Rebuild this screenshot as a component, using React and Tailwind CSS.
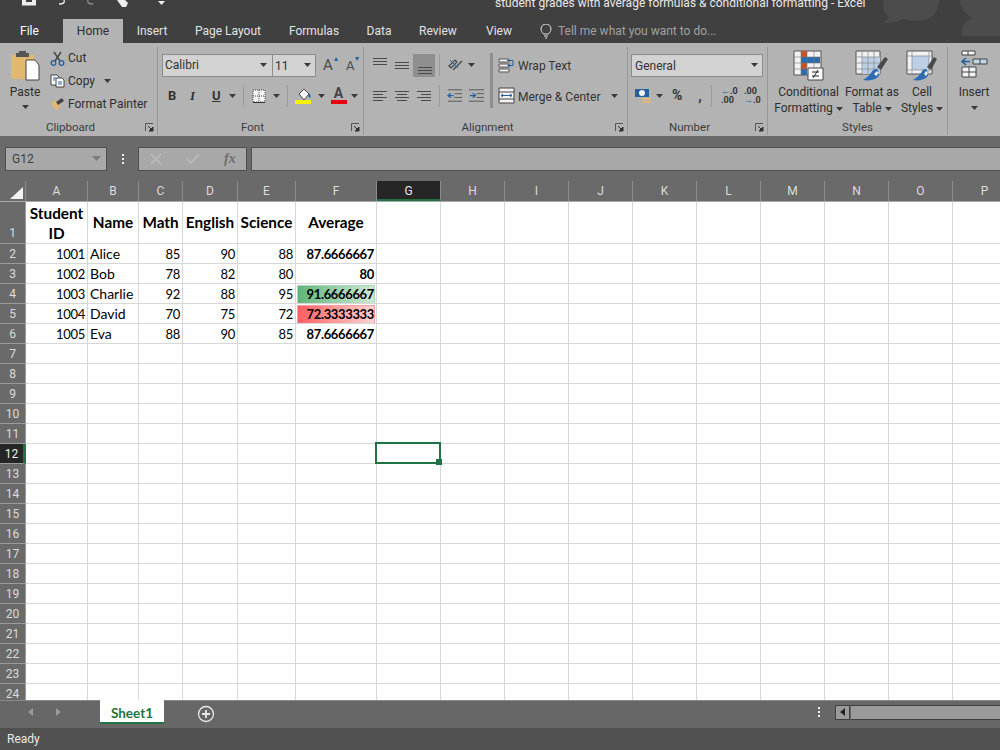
import React from "react";

const ui = "font-['Roboto',sans-serif]";
const columns = [
  ["A", 62], ["B", 51], ["C", 44], ["D", 55], ["E", 58], ["F", 81], ["G", 64], ["H", 64],
  ["I", 64], ["J", 64], ["K", 64], ["L", 64], ["M", 64], ["N", 64], ["O", 64], ["P", 64],
];
const students = [
  ["1001", "Alice", "85", "90", "88", "87.6666667", ""],
  ["1002", "Bob", "78", "82", "80", "80", ""],
  ["1003", "Charlie", "92", "88", "95", "91.6666667", "green"],
  ["1004", "David", "70", "75", "72", "72.3333333", "red"],
  ["1005", "Eva", "88", "90", "85", "87.6666667", ""],
];
const rowNumbers = Array.from({ length: 24 }, (_, i) => i + 1);

function Caret({ className = "" }) {
  return (
    <svg width="7" height="4" viewBox="0 0 7 4" className={className}>
      <path d="M0 0h7L3.500 4z" fill="#3a3a3a" />
    </svg>
  );
}

function Launcher() {
  return (
    <svg width="9" height="9" viewBox="0 0 9 9" className="absolute right-[3px] bottom-[3px]">
      <path d="M.5 8V.5H8" fill="none" stroke="#555" />
      <path d="M3 3l4 4M8 4v4H4z" stroke="#333" fill="#333" />
    </svg>
  );
}

function Sep({ className = "" }) {
  return <div className={`w-px h-[22px] bg-[#9a9a9a] ${className}`} />;
}

function Lines({ rows, active }) {
  // small paragraph-style alignment glyph
  return (
    <svg width="22" height="23" viewBox="0 0 22 23" className={active ? "bg-[#8f8f8f]" : ""}>
      {rows.map(([x1, x2, y], i) => (
        <path key={i} d={`M${x1} ${y}.5H${x2}`} stroke="#4a4a4a" />
      ))}
    </svg>
  );
}

function Group({ width, label, children }) {
  return (
    <div className={`relative h-[88px] mt-[4px] border-r border-[#989898] flex flex-col shrink-0 ${width}`}>
      <div className="flex-1 min-h-0">{children}</div>
      <div className="h-[17px] pr-[16px] pt-[2px] text-center text-[11.500px] leading-[15px] text-[#3c3c3c]">{label}</div>
      <Launcher />
    </div>
  );
}

function StyleButton({ icon, lines, width }) {
  return (
    <div className={`flex flex-col items-center shrink-0 ${width}`}>
      <div className="h-[37px] pt-[3px]">{icon}</div>
      <div className="text-[12px] leading-[16px] text-[#2e2e2e] whitespace-nowrap text-center">
        {lines[0]}
        <br />
        {lines[1]} <Caret className="inline-block align-middle" />
      </div>
    </div>
  );
}

function ConditionalIcon() {
  return (
    <svg width="32" height="31" viewBox="0 0 32 31">
      <path d="M1 1h27v24H1z" fill="#f2f2f2" stroke="#555" />
      <path d="M8 1h6v6H8zM8 13h6v6H8z" fill="#c8512a" />
      <path d="M8 7h19v6H8zM8 19h6v6H8z" fill="#2b6cb0" />
      <path d="M1 7h27M1 13h27M1 19h27M8 1v24M14 1v24M21 1v24" stroke="#777" strokeWidth=".6" />
      <path d="M15 18h15v12H15z" fill="#fff" stroke="#444" />
      <path d="M19 22h7M19 26h7M25 20l-5 8" stroke="#222" />
    </svg>
  );
}

function TableIcon() {
  return (
    <svg width="34" height="32" viewBox="0 0 34 32">
      <path d="M1 1h24v23H1z" fill="#efefef" stroke="#555" />
      <path d="M7 7h18v17H7z" fill="#bccfe6" />
      <path d="M1 7h24M1 13h24M1 19h24M7 1v23M13 1v23M19 1v23" stroke="#888" strokeWidth=".7" />
      <path d="M22 17l8-10 3 2-7 11z" fill="#4a4a4a" />
      <path d="M8 30c5 1 12 0 15-3 2-2 1-6-1-8-3 0-5 2-6 4-2 3-5 5-8 7z" fill="#2a6cb3" />
      <path d="M19 24l3-3 2 2-3 3z" fill="#eee" />
    </svg>
  );
}

function CellStyleIcon() {
  return (
    <svg width="32" height="32" viewBox="0 0 32 32">
      <path d="M1 1h25v23H1z" fill="#f2f2f2" stroke="#555" />
      <path d="M6 6h17v14H6z" fill="#bccfe6" />
      <path d="M1 6h25M1 20h25M6 1v23M23 1v23" stroke="#888" strokeWidth=".7" />
      <path d="M21 17l7-10 3 2-6 11z" fill="#4a4a4a" />
      <path d="M7 30c5 1 11 0 14-3 2-2 1-6-1-8-3 0-4 2-5 4-2 3-5 5-8 7z" fill="#2a6cb3" />
      <path d="M18 24l2-3 2 2-2 3z" fill="#eee" />
    </svg>
  );
}

function InsertIcon() {
  return (
    <svg width="27" height="28" viewBox="0 0 27 28">
      <path d="M1 1h13v4H1zM7 1v4M1 17h14v10H1zM1 22h14M8 17v10" fill="#f4f4f4" stroke="#444" />
      <path d="M12 9h14v5H12zM19 9v5" fill="#c0d4ea" stroke="#444" />
      <path d="M1 11.500h8M5 8l-4 3.500L5 15" fill="none" stroke="#23609f" strokeWidth="1.600" />
    </svg>
  );
}

function Clipboard() {
  return (
    <div className="flex h-full">
      <div className="w-[43px] flex flex-col items-center pl-[7px] pt-[3px]">
        <svg width="30" height="31" viewBox="0 0 30 31">
          <path d="M1 5h23v24H1z" fill="#e2b871" />
          <path d="M9 3h7V1H9zM6 3h13v4H6z" fill="#555" />
          <path d="M16 10h9l4 5v15H16z" fill="#fff" stroke="#444" />
        </svg>
        <div className="text-[12px] leading-[16px] mt-[3px] text-[#2e2e2e]">Paste</div>
        <Caret className="mt-[5px]" />
      </div>
      <div className="flex flex-col pl-[7px] text-[12px] leading-[23px] text-[#2e2e2e]">
        <div className="flex items-center gap-[3px] h-[23px]">
          <svg width="15" height="15" viewBox="0 0 15 15">
            <path d="M4 1l6 9M11 1L5 10" stroke="#444" strokeWidth="1.400" />
            <circle cx="3.500" cy="12" r="2.300" fill="none" stroke="#23609f" strokeWidth="1.300" />
            <circle cx="11.500" cy="12" r="2.300" fill="none" stroke="#23609f" strokeWidth="1.300" />
          </svg>
          Cut
        </div>
        <div className="flex items-center gap-[3px] h-[23px]">
          <svg width="15" height="14" viewBox="0 0 15 14">
            <path d="M1 1h6l2 2v8H1z" fill="#fff" stroke="#444" />
            <path d="M6 4h6l2 2v7H6z" fill="#fff" stroke="#444" />
            <path d="M3 4h3M3 6h2M8 8h4M8 10h4" stroke="#23609f" />
          </svg>
          Copy
          <Caret className="ml-[6px]" />
        </div>
        <div className="flex items-center gap-[3px] h-[23px]">
          <svg width="15" height="14" viewBox="0 0 15 14">
            <path d="M1 6l5-3 4 7-3 3C5 13 3 9 1 6z" fill="#e2b871" />
            <path d="M6 5l6-4 2 3-6 4z" fill="#444" />
          </svg>
          Format Painter
        </div>
      </div>
    </div>
  );
}

function FontGroup() {
  return (
    <div className="pl-[4px] pt-[7px] flex flex-col text-[#333]">
      <div className="flex items-center h-[23px]">
        <div className="w-[111px] h-[23px] bg-[#d2d2d2] border border-[#8c8c8c] flex items-center justify-between pl-[2px] pr-[5px] text-[12px] leading-[23px]">
          <span className="pt-px">Calibri</span> <Caret />
        </div>
        <div className="w-[43px] h-[23px] bg-[#d2d2d2] border border-l-0 border-[#8c8c8c] flex items-center justify-between pl-[2px] pr-[4px] text-[12px]">
          <span className="pt-px">11</span> <Caret />
        </div>
        <div className="ml-[7px] w-[22px] text-[15px] leading-none text-[#4a4a4a] relative">
          A<span className="absolute left-[11px] -top-[3px] text-[8px] text-[#23609f]">▴</span>
        </div>
        <div className="ml-[1px] text-[13px] leading-none text-[#4a4a4a] relative">
          A<span className="absolute left-[9px] -top-[4px] text-[8px] text-[#23609f]">▾</span>
        </div>
      </div>
      <div className="flex items-center h-[22px] mt-[8px] pl-[6px]">
        <span className="w-[22px] text-[13px] font-bold">B</span>
        <span className="w-[22px] text-[13px] font-bold italic font-['Liberation_Serif',serif]">I</span>
        <span className="w-[17px] text-[13px] font-bold underline">U</span>
        <Caret />
        <Sep className="ml-[7px]" />
        <svg width="14" height="14" viewBox="0 0 14 14" className="ml-[8px]">
          <path d="M1 1h12v12H1z" fill="#f5f5f5" />
          <path d="M1 1h12v12H1zM1 7h12M7 1v12" fill="none" stroke="#444" strokeDasharray="1 1" />
          <path d="M1 13.500h12" stroke="#333" />
        </svg>
        <Caret className="ml-[7px]" />
        <Sep className="ml-[7px]" />
        <svg width="17" height="17" viewBox="0 0 17 17" className="ml-[7px]">
          <path d="M4 7l5-5 5 5-5 6z" fill="#f5f5f5" stroke="#444" />
          <path d="M14 6c2 2 2 4 1 5-2-1-2-3-1-5z" fill="#23609f" />
          <path d="M0 13h16v4H0z" fill="#f7f000" />
        </svg>
        <Caret className="ml-[6px]" />
        <div className="ml-[5px] w-[17px] flex flex-col items-center">
          <span className="text-[14px] leading-[13px] font-bold text-[#444]">A</span>
          <div className="w-[16px] h-[4px] bg-[#e8000c]" />
        </div>
        <Caret className="ml-[4px]" />
      </div>
    </div>
  );
}

function AlignmentGroup() {
  return (
    <div className="pl-[5px] pt-[7px] flex text-[12px] text-[#333]">
      <div className="flex flex-col">
        <div className="flex items-center h-[23px]">
          <Lines rows={[[4, 18, 4], [4, 18, 7], [4, 18, 10]]} />
          <Lines rows={[[4, 18, 8], [4, 18, 11], [4, 18, 14]]} />
          <Lines rows={[[5, 19, 13], [5, 19, 16], [5, 19, 19]]} active />
          <div className="w-px h-[22px] bg-[#9a9a9a] ml-[4px]" />
          <svg width="22" height="18" viewBox="0 0 22 18" className="ml-[6px]">
            <path d="M3 10l6-6 2 2-6 6zM7 14l9-9" fill="none" stroke="#444" strokeWidth="1.200" />
            <path d="M4 4l8 8" stroke="#23609f" />
          </svg>
          <Caret />
        </div>
        <div className="flex items-center h-[22px] mt-[8px]">
          <Lines rows={[[4, 18, 7], [4, 14, 10], [4, 18, 13], [4, 14, 16]]} />
          <Lines rows={[[4, 18, 7], [6, 16, 10], [4, 18, 13], [6, 16, 16]]} />
          <Lines rows={[[4, 18, 7], [8, 18, 10], [4, 18, 13], [8, 18, 16]]} />
          <div className="w-px h-[22px] bg-[#9a9a9a] ml-[4px]" />
          <svg width="38" height="14" viewBox="0 0 40 14" className="ml-[7px]">
            <path d="M1 .500h15M8 4.500h8M8 8.500h8M1 12.500h15M23 .500h16M31 4.500h8M31 8.500h8M23 12.500h16" stroke="#555" />
            <path d="M7 6.500H1M4 4L1 6.500 4 9M24 6.500h6M27 4l3 2.500L27 9" fill="none" stroke="#23609f" strokeWidth="1.300" />
          </svg>
        </div>
      </div>
      <div className="w-[3px] h-[55px] bg-[#8e8e8e] ml-[5px] -mt-[1px]" />
      <div className="flex flex-col pl-[5px] whitespace-nowrap">
        <div className="flex items-center gap-[2px] h-[23px]">
          <svg width="17" height="15" viewBox="0 0 17 15">
            <path d="M1 1h10v3H1zM1 6h10v3H1zM1 11h10v3H1z" fill="#f2f2f2" stroke="#555" />
            <path d="M9 2.500h6v5h-5M12 5.500L10 7.500l2 2" fill="none" stroke="#23609f" />
          </svg>
          <span className="pt-[2px] pl-px">Wrap Text</span>
        </div>
        <div className="flex items-center gap-[2px] h-[22px] mt-[8px]">
          <svg width="17" height="17" viewBox="0 0 17 17">
            <path d="M1 1h15v15H1z" fill="#f2f2f2" stroke="#444" />
            <path d="M1 5h15M1 12h15" stroke="#444" />
            <path d="M3 8.500h11M5 7L3 8.500 5 10M12 7l2 1.500L12 10" fill="none" stroke="#23609f" />
          </svg>
          <span className="pt-[2px] pl-px">Merge &amp; Center</span>
          <Caret className="ml-[9px]" />
        </div>
      </div>
    </div>
  );
}

function NumberGroup() {
  return (
    <div className="pl-[3px] pt-[7px] flex flex-col text-[#333]">
      <div className="w-[132px] h-[23px] bg-[#d2d2d2] border border-[#8c8c8c] flex items-center justify-between pl-[3px] pr-[4px] text-[12px]">
        <span className="pt-px">General</span> <Caret />
      </div>
      <div className="flex items-center h-[22px] mt-[8px] pl-[3px]">
        <svg width="18" height="16" viewBox="0 0 18 16">
          <path d="M1 1h14v8H1z" fill="#23609f" />
          <ellipse cx="8" cy="5" rx="3" ry="3" fill="#f2f2f2" />
          <path d="M8 10h9v2H8zM8 13h9v2H8z" fill="#e2b871" />
        </svg>
        <Caret className="ml-[4px]" />
        <span className="ml-[9px] w-[20px] text-[14px] font-bold text-[#333]">%</span>
        <span className="w-[16px] text-[14px] font-bold text-center leading-none">,</span>
        <Sep className="ml-[3px]" />
        <div className="ml-[9px] w-[17px] flex flex-col text-[9px] leading-[9px] font-bold">
          <div><span className="text-[#23609f]">←</span>.0</div>
          <div>.00</div>
        </div>
        <div className="ml-[6px] w-[17px] flex flex-col text-[9px] leading-[9px] font-bold">
          <div>.00</div>
          <div><span className="text-[#23609f]">→</span>.0</div>
        </div>
      </div>
    </div>
  );
}

function Ribbon() {
  return (
    <div className="h-[93px] bg-[#b3b3b3] flex overflow-hidden">
      <Group width="w-[158px]" label="Clipboard"><Clipboard /></Group>
      <Group width="w-[206px]" label="Font"><FontGroup /></Group>
      <Group width="w-[264px]" label="Alignment"><AlignmentGroup /></Group>
      <Group width="w-[140px]" label="Number"><NumberGroup /></Group>
      <div className="relative h-[88px] mt-[4px] border-r border-[#989898] w-[180px] shrink-0 flex flex-col">
        <div className="flex-1 flex pl-[4px]">
          <StyleButton width="w-[73px]" icon={<ConditionalIcon />} lines={["Conditional", "Formatting"]} />
          <StyleButton width="w-[54px]" icon={<TableIcon />} lines={["Format as", "Table"]} />
          <StyleButton width="w-[46px]" icon={<CellStyleIcon />} lines={["Cell", "Styles"]} />
        </div>
        <div className="h-[17px] pt-[2px] text-center text-[11.500px] leading-[15px] text-[#3c3c3c]">Styles</div>
      </div>
      <div className="w-[52px] mt-[4px] flex flex-col items-center shrink-0">
        <div className="h-[37px] pt-[3px]"><InsertIcon /></div>
        <div className="text-[12px] leading-[16px] text-[#2e2e2e]">Insert</div>
        <Caret className="mt-[6px]" />
      </div>
    </div>
  );
}

function TitleBar() {
  const tabs = [
    ["Insert", "w-[58px]"], ["Page Layout", "w-[94px]"], ["Formulas", "w-[78px]"],
    ["Data", "w-[52px]"], ["Review", "w-[66px]"], ["View", "w-[56px]"],
  ];
  return (
    <div className="relative h-[43px] bg-[#404040] overflow-hidden">
      <svg width="130" height="40" viewBox="0 0 130 40" className="absolute right-0 top-0">
        <path d="M13 0c0 8 1 14 6 17-2 3-4 5-6 6 8 1 14-1 20-4 12 4 26 2 32-6 3-4 4-9 4-13z" fill="#4c4c4c" />
        <path d="M90 0c0 9 6 16 14 18-8 2-14 8-12 18h38V0z" fill="#4c4c4c" />
      </svg>
      <div className="h-[19px] relative">
        <svg width="15" height="6" viewBox="0 0 15 6" className="absolute left-[22px] top-0">
          <path d="M0 0h14v5.500H0z" fill="#ededed" />
          <path d="M4 0h6v2H4z" fill="#404040" />
        </svg>
        <svg width="8" height="5" viewBox="0 0 8 5" className="absolute left-[58px] top-0">
          <path d="M6 0c1 3-1 4-5 4" fill="none" stroke="#ededed" strokeWidth="1.300" />
        </svg>
        <svg width="8" height="5" viewBox="0 0 8 5" className="absolute left-[86px] top-0">
          <path d="M2 0c-1 3 1 4 5 4" fill="none" stroke="#8a8a8a" strokeWidth="1.300" />
        </svg>
        <svg width="12" height="7" viewBox="0 0 12 7" className="absolute left-[117px] top-0">
          <path d="M0 0h8l3 3-2 4H5z" fill="#ededed" />
        </svg>
        <svg width="7" height="4" viewBox="0 0 7 4" className="absolute left-[158px] top-[1px]">
          <path d="M0 0h7L3.500 4z" fill="#ededed" />
        </svg>
        <div className="absolute left-[495px] -top-[5px] text-[12px] leading-[16px] text-[#e8e8e8] whitespace-nowrap">
          student grades with average formulas &amp; conditional formatting - Excel
        </div>
      </div>
      <div className="relative flex h-[24px] text-[12px] text-[#e2e2e2]">
        <div className="w-[63px] pl-[20px] leading-[25px] text-white">File</div>
        <div className="w-[60px] bg-[#b3b3b3] text-center leading-[25px] text-[#2e2e2e]">Home</div>
        {tabs.map(([name, width]) => (
          <div key={name} className={`${width} text-center leading-[25px] shrink-0`}>{name}</div>
        ))}
        <div className="flex items-center pl-[13px] text-[#a0a0a0]">
          <svg width="12" height="15" viewBox="0 0 12 15" className="mr-[6px]">
            <path d="M3.500 10C2 8 1 7 1 5a5 5 0 0110 0c0 2-1 3-2.500 5zM4 12h4M5 14h2" fill="none" stroke="#e2e2e2" />
          </svg>
          Tell me what you want to do...
        </div>
      </div>
    </div>
  );
}

function FormulaBar() {
  return (
    <div className="h-[45px] bg-[#6a6a6a] flex pl-[5px] pt-[11px] shrink-0">
      <div className="w-[102px] h-[24px] bg-[#a8a8a8] border border-[#4f4f4f] flex items-center justify-between pl-[6px] pr-[5px] text-[12px] text-[#3f3f3f]">
        G12 <svg width="9" height="5" viewBox="0 0 9 5"><path d="M0 0h9L4.500 5z" fill="#7c7c7c" /></svg>
      </div>
      <div className="w-[31px] h-[24px] flex flex-col items-center justify-center gap-[2px]">
        <i className="w-[2px] h-[2px] bg-[#eee]" /><i className="w-[2px] h-[2px] bg-[#eee]" /><i className="w-[2px] h-[2px] bg-[#eee]" />
      </div>
      <div className="w-[109px] h-[24px] bg-[#a8a8a8] border border-[#4f4f4f] flex items-center pl-[11px]">
        <svg width="12" height="12" viewBox="0 0 12 12"><path d="M1 1l10 10M11 1L1 11" stroke="#bdbdbd" strokeWidth="1.500" /></svg>
        <svg width="14" height="12" viewBox="0 0 14 12" className="ml-[24px]"><path d="M1 6l4 4 8-9" fill="none" stroke="#bdbdbd" strokeWidth="1.500" /></svg>
        <span className="ml-[24px] text-[14px] italic text-[#6e6e6e] font-['Liberation_Serif',serif] font-bold">fx</span>
      </div>
      <div className="flex-1 ml-[4px] h-[24px] bg-[#a8a8a8] border border-r-0 border-[#4f4f4f]" />
    </div>
  );
}

function ColumnHeader() {
  return (
    <div className="flex h-[21px] bg-[#6a6a6a] border-b border-[#a8a8a8] shrink-0 text-[12px] text-[#dcdcdc]">
      <div className="w-[26px] shrink-0 border-r border-[#8c8c8c] relative">
        <svg width="13" height="12" viewBox="0 0 13 12" className="absolute left-[10px] bottom-[2px]">
          <path d="M13 0v12H0z" fill="#f2f2f2" />
        </svg>
      </div>
      {columns.map(([name, width]) => (
        <div
          key={name}
          style={{ width }}
          className={`shrink-0 text-center leading-[21px] border-r border-[#8c8c8c] ${name === "G" ? "bg-[#262626] border-b-2 border-b-[#217346] text-[#e8e8e8]" : ""}`}
        >
          {name}
        </div>
      ))}
    </div>
  );
}

function fillClass(fill) {
  if (fill === "green") return "m-px !pr-0 h-[17px] bg-gradient-to-r from-[#5fb57b] to-[#cfe8d6] border border-[#a9d8b8]";
  if (fill === "red") return "m-px !pr-0 h-[17px] bg-gradient-to-r from-[#ff5b63] to-[#ffd2d2] border border-[#ff9fa3]";
  return "";
}

function Cell({ col, children, className = "" }) {
  const width = columns[col][1];
  return (
    <div style={{ width }} className={`shrink-0 border-r border-b border-[#d8d8d8] overflow-hidden whitespace-nowrap ${className}`}>
      {children}
    </div>
  );
}

function HeaderRow() {
  const heads = ["Student ID", "Name", "Math", "English", "Science", "Average"];
  return (
    <div className="flex h-[42px] shrink-0">
      <div className={`w-[26px] shrink-0 bg-[#6a6a6a] border-r border-b border-[#9a9a9a] text-center text-[12px] text-[#dcdcdc] flex items-end justify-center leading-[19px] ${ui}`}>1</div>
      {heads.map((head, i) => (
        <Cell key={head} col={i} className="flex items-center justify-center text-center font-bold text-[15.300px] leading-[20px] text-black">
          {head === "Student ID" ? <span className="pt-px">Student<br />ID</span> : head}
        </Cell>
      ))}
      {columns.slice(6).map(([name], i) => <Cell key={name} col={i + 6} />)}
    </div>
  );
}

function DataRow({ number }) {
  const record = students[number - 2];
  const selected = number === 12;
  return (
    <div className="flex h-[20px] shrink-0 text-[14px] leading-[19px] text-black">
      <div className={`w-[26px] shrink-0 border-b text-center text-[12px] leading-[21px] ${ui} ${selected ? "bg-[#262626] border-r-[3px] border-r-[#217346] border-b-[#9a9a9a] text-[#ececec]" : "bg-[#6a6a6a] border-r border-[#9a9a9a] text-[#dcdcdc]"}`}>
        {number}
      </div>
      {columns.map(([name], i) => {
        if (record && i < 6) {
          if (i === 5) {
            return (
              <Cell key={name} col={i} className="text-[13px] tracking-[-0.35px] leading-[20px]">
                <div className={`h-full pr-[2px] text-right font-bold ${fillClass(record[6])} ${record[6] ? "leading-[16px]" : ""}`}>{record[5]}</div>
              </Cell>
            );
          }
          if (i === 1) {
            return <Cell key={name} col={i} className="px-[2px] text-left">{record[i]}</Cell>;
          }
          return (
            <Cell key={name} col={i} className="px-[2px] text-right text-[13px] tracking-[-0.3px] leading-[20px]">
              {record[i]}
            </Cell>
          );
        }
        if (selected && name === "G") {
          return (
            <Cell key={name} col={i} className="relative !overflow-visible">
              <div className="absolute -left-[2px] -top-[2px] -right-px -bottom-px border-2 border-[#217346]" />
              <div className="absolute -right-[2px] -bottom-[2px] w-[6px] h-[6px] bg-[#217346]" />
            </Cell>
          );
        }
        return <Cell key={name} col={i} />;
      })}
    </div>
  );
}

function SheetTabs() {
  return (
    <div className="h-[28px] bg-[#676767] border-t border-[#8a8a8a] flex shrink-0">
      <div className="w-[100px] flex items-center pl-[28px] gap-[23px] pb-[5px]">
        <svg width="5" height="8" viewBox="0 0 5 8"><path d="M5 0v8L0 4z" fill="#9a9a9a" /></svg>
        <svg width="5" height="8" viewBox="0 0 5 8"><path d="M0 0v8l5-4z" fill="#9a9a9a" /></svg>
      </div>
      <div className="w-[64px] h-[24px] -mt-px bg-white border-b-2 border-[#217346] text-center text-[13.500px] font-bold leading-[26px] text-[#217346] font-['Lato',sans-serif]">
        Sheet1
      </div>
      <div className="ml-[33px] pt-[4px] h-[24px]">
        <svg width="18" height="18" viewBox="0 0 18 18">
          <circle cx="9" cy="9" r="7.500" fill="none" stroke="#e8e8e8" strokeWidth="1.300" />
          <path d="M9 5v8M5 9h8" stroke="#e8e8e8" strokeWidth="1.800" />
        </svg>
      </div>
      <div className="ml-auto w-[190px] flex items-center pb-[5px]">
        <div className="flex flex-col gap-[2px] w-[18px] items-center">
          <i className="w-[2px] h-[2px] bg-[#f0f0f0]" /><i className="w-[2px] h-[2px] bg-[#f0f0f0]" /><i className="w-[2px] h-[2px] bg-[#f0f0f0]" />
        </div>
        <div className="ml-[7px] w-[15px] h-[15px] bg-[#9a9a9a] border border-[#3f3f3f] flex items-center justify-center">
          <svg width="5" height="8" viewBox="0 0 5 8"><path d="M5 0v8L0 4z" fill="#222" /></svg>
        </div>
        <div className="flex-1 h-[15px] ml-px bg-[#9a9a9a] border-y border-[#3f3f3f]" />
      </div>
    </div>
  );
}

export default function App() {
  return (
    <div className={`w-[1000px] h-[750px] overflow-hidden flex flex-col bg-white ${ui}`}>
      <TitleBar />
      <Ribbon />
      <FormulaBar />
      <div className="h-[520px] overflow-hidden flex flex-col font-['Lato',sans-serif]">
        <div className={ui}><ColumnHeader /></div>
        <HeaderRow />
        {rowNumbers.slice(1).map((n) => <DataRow key={n} number={n} />)}
      </div>
      <SheetTabs />
      <div className="h-[22px] bg-[#505050] text-[12px] leading-[23px] pl-[7px] text-[#e8e8e8] shrink-0">Ready</div>
    </div>
  );
}
